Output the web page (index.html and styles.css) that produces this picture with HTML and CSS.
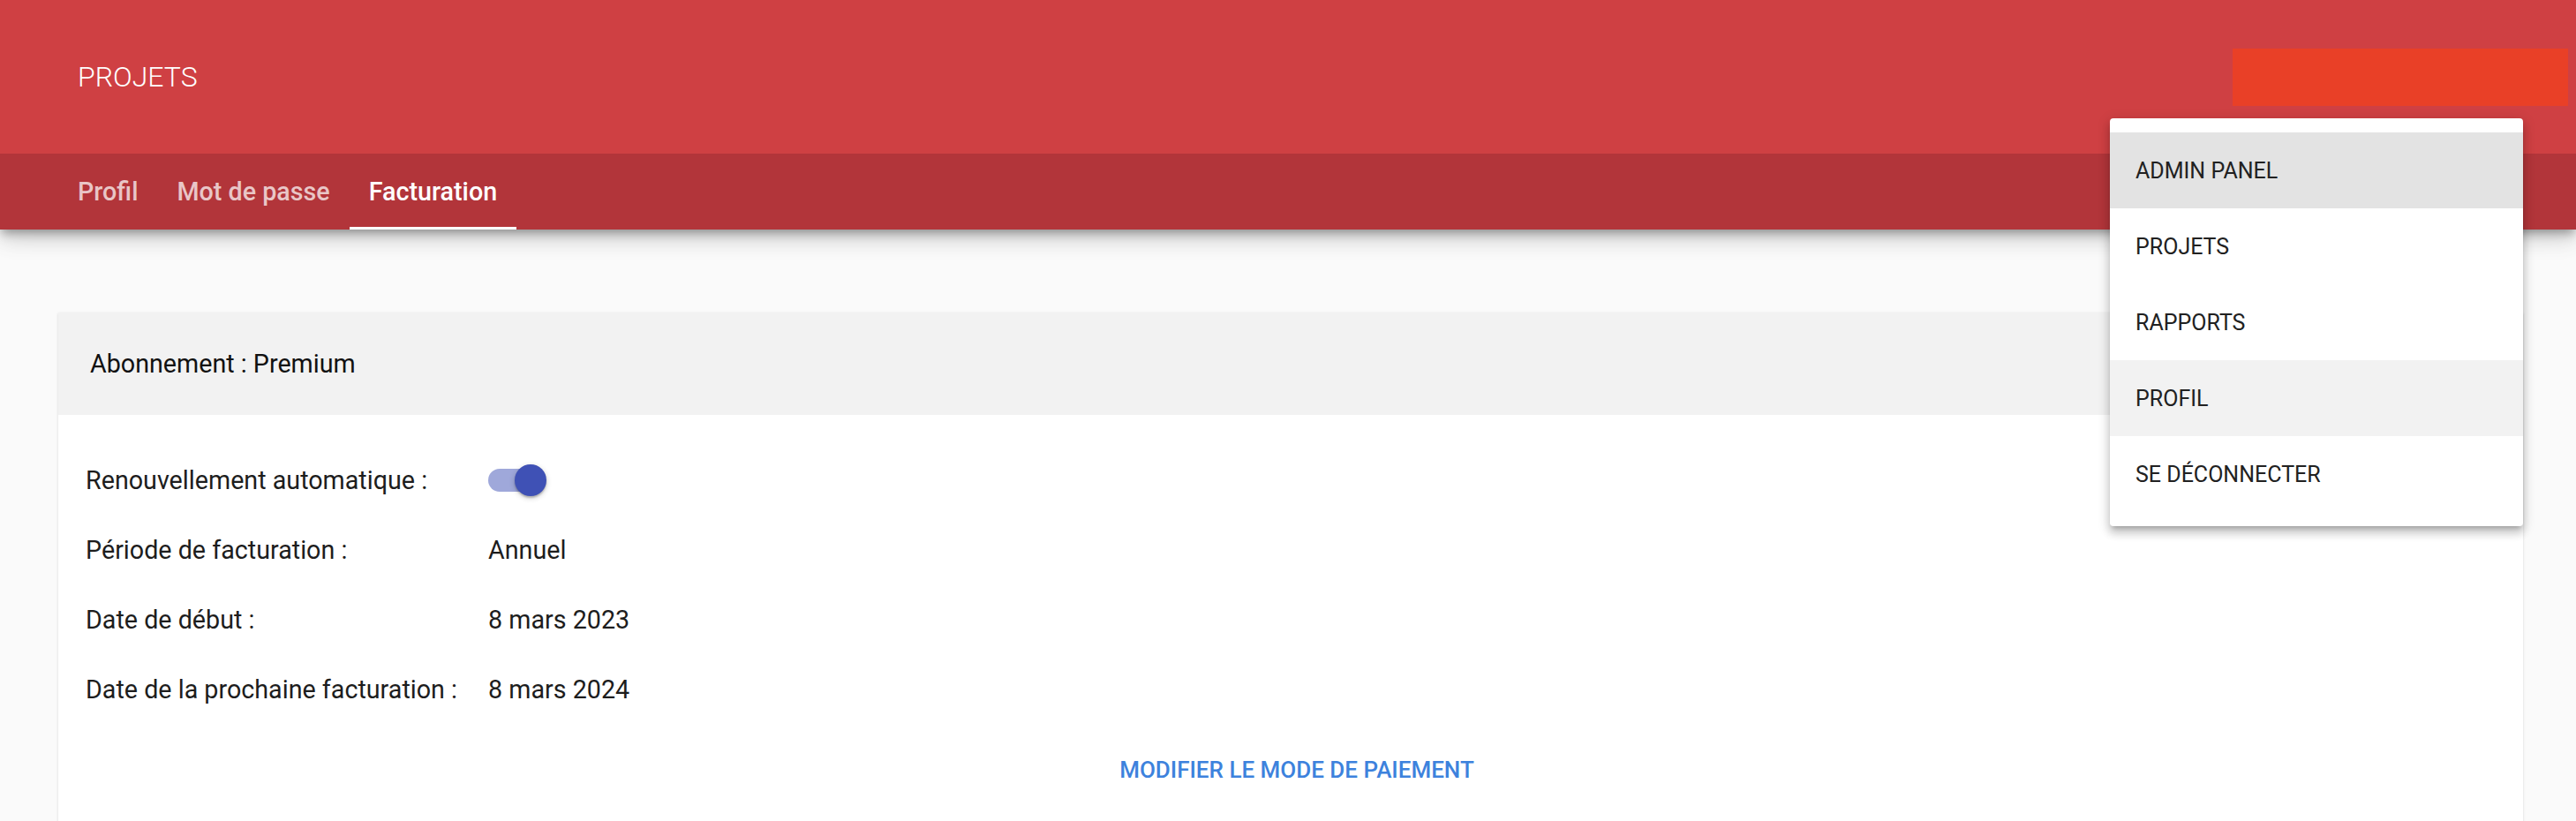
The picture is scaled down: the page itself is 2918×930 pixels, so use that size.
FILE: index.html
```html
<!DOCTYPE html>
<html lang="fr">
<head>
  <meta charset="UTF-8" />
  <title>Facturation – Projets</title>
  <link rel="stylesheet" href="styles.css">
</head>
<body>

  <header class="app-header">
    <div class="toolbar">
      <span class="toolbar-title">PROJETS</span>
      <div class="account-slot"></div>
    </div>
    <nav class="tabs">
      <a class="tab">Profil</a>
      <a class="tab">Mot de passe</a>
      <a class="tab active">Facturation</a>
    </nav>
  </header>

  <main class="content">
    <section class="card">
      <div class="card-header">Abonnement : Premium</div>
      <div class="card-body">
        <div class="details">
          <span class="label">Renouvellement automatique :</span>
          <span class="value">
            <span class="toggle"><span class="toggle-track"></span><span class="toggle-thumb"></span></span>
          </span>
          <span class="label">Période de facturation :</span>
          <span class="value">Annuel</span>
          <span class="label">Date de début :</span>
          <span class="value">8 mars 2023</span>
          <span class="label">Date de la prochaine facturation :</span>
          <span class="value">8 mars 2024</span>
        </div>
        <div class="actions">
          <button class="text-button">MODIFIER LE MODE DE PAIEMENT</button>
        </div>
      </div>
    </section>
  </main>

  <div class="menu">
    <div class="menu-item focused">ADMIN PANEL</div>
    <div class="menu-item">PROJETS</div>
    <div class="menu-item">RAPPORTS</div>
    <div class="menu-item hovered">PROFIL</div>
    <div class="menu-item">SE DÉCONNECTER</div>
  </div>

</body>
</html>
```

FILE: styles.css
```css
* {
  margin: 0;
  padding: 0;
  box-sizing: border-box;
}

body {
  font-family: Roboto, 'Liberation Sans', sans-serif;
  background: #fafafa;
  color: rgba(0, 0, 0, 0.87);
  height: 930px;
  overflow: hidden;
}

.app-header {
  position: relative;
  z-index: 2;
  box-shadow: 0 6px 10px -2px rgba(0, 0, 0, 0.3), 0 12px 20px rgba(0, 0, 0, 0.12), 0 2px 36px rgba(0, 0, 0, 0.1);
}

.toolbar {
  height: 174px;
  background: #cf4043;
  display: flex;
  align-items: center;
  justify-content: space-between;
  padding: 0 9px 0 88px;
}

.toolbar-title {
  color: #fff;
  font-size: 32px;
  font-weight: 300;
}

.account-slot {
  width: 380px;
  height: 65px;
  background: #e94027;
}

.tabs {
  height: 86px;
  background: #b2353a;
  display: flex;
  padding-left: 66px;
}

.tab {
  display: flex;
  align-items: center;
  padding: 0 22px;
  font-size: 28.7px;
  font-weight: 500;
  color: rgba(255, 255, 255, 0.72);
  position: relative;
}

.tab.active {
  color: #fff;
}

.tab.active::after {
  content: "";
  position: absolute;
  left: 0;
  right: 0;
  bottom: 0;
  height: 3px;
  background: #fff;
}

.content {
  padding: 94px 60px 0 66px;
}

.card {
  background: #fff;
  box-shadow: 0 1px 3px rgba(0, 0, 0, 0.12), 0 1px 1px rgba(0, 0, 0, 0.06);
  height: 600px;
}

.card-header {
  height: 116px;
  background: #f2f2f2;
  display: flex;
  align-items: center;
  padding-left: 36px;
  font-size: 28.7px;
  color: #111;
}

.card-body {
  padding: 34px 31px 0;
}

.details {
  display: grid;
  grid-template-columns: auto 1fr;
  grid-auto-rows: 79px;
  column-gap: 35px;
  align-items: center;
  font-size: 28.7px;
  color: #1d1d1d;
}

.toggle {
  display: block;
  position: relative;
  width: 66px;
  height: 36px;
}

.toggle-track {
  position: absolute;
  left: 0;
  top: 5px;
  width: 62px;
  height: 26px;
  border-radius: 13px;
  background: #9fa8da;
}

.toggle-thumb {
  position: absolute;
  left: 30px;
  top: 0;
  width: 36px;
  height: 36px;
  border-radius: 50%;
  background: #3f51b5;
  box-shadow: 0 2px 2px rgba(0, 0, 0, 0.2), 0 2px 6px rgba(0, 0, 0, 0.2);
}

.actions {
  display: flex;
  justify-content: center;
  margin-top: 16px;
  padding-left: 14px;
}

.text-button {
  height: 72px;
  padding: 0 32px;
  border: none;
  background: none;
  font-family: inherit;
  font-size: 26px;
  font-weight: 500;
  color: #3d82dd;
}

.menu {
  position: absolute;
  left: 2390px;
  top: 134px;
  width: 468px;
  padding: 16px 0;
  background: #fff;
  border-radius: 4px;
  z-index: 10;
  box-shadow: 0 5px 5px -3px rgba(0, 0, 0, 0.2), 0 8px 10px 1px rgba(0, 0, 0, 0.14), 0 3px 14px 2px rgba(0, 0, 0, 0.12);
}

.menu-item {
  height: 86px;
  display: flex;
  align-items: center;
  padding-left: 29px;
  font-size: 25px;
  color: #212121;
}

.menu-item.focused {
  background: #e3e3e3;
}

.menu-item.hovered {
  background: #f2f2f2;
}
```
